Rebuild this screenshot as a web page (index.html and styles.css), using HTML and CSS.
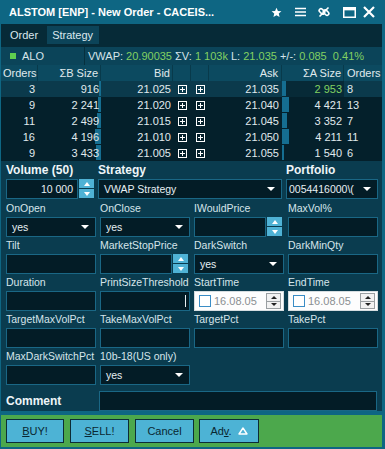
FILE: index.html
```html
<!DOCTYPE html>
<html>
<head>
<meta charset="utf-8">
<title>New Order</title>
<link rel="stylesheet" href="styles.css">
</head>
<body>
<div class="window">
  <div class="titlebar">
    <div class="title">ALSTOM [ENP] - New Order - CACEIS...</div>
    <div class="ticons">
      <svg class="ic-star" width="11" height="11" viewBox="0 0 24 24"><path d="M12 1.5l3.1 7.1 7.7.6-5.9 5.1 1.8 7.6L12 17.8l-6.7 4.1 1.8-7.6L1.2 9.2l7.7-.6z" fill="#fff"/></svg>
      <svg class="ic-menu" width="11" height="10" viewBox="0 0 11 10"><path d="M0 1.5h11M0 5h11M0 8.5h11" stroke="#fff" stroke-width="1.3"/></svg>
      <svg class="ic-link" width="12" height="12" viewBox="0 0 12 12"><g fill="none" stroke="#fff" stroke-width="1.6"><rect x="0.8" y="3.6" width="6.2" height="3.6" rx="1.8" transform="rotate(45 3.9 5.4)"/><rect x="5" y="4.8" width="6.2" height="3.6" rx="1.8" transform="rotate(45 8.1 6.6)"/><path d="M1.5 10.5L10.5 1.5"/></g></svg>
      <svg class="ic-max" width="13" height="11" viewBox="0 0 13 11"><rect x="0.75" y="0.75" width="11.5" height="9.5" fill="none" stroke="#fff" stroke-width="1.5"/><rect x="0.75" y="0.75" width="11.5" height="2.6" fill="#fff"/></svg>
      <svg class="ic-close" width="12" height="12" viewBox="0 0 12 12"><path d="M1 1l10 10M11 1L1 11" stroke="#fff" stroke-width="2.2"/></svg>
    </div>
  </div>

  <div class="menubar">
    <span class="menu-item">Order</span>
    <span class="menu-item active">Strategy</span>
  </div>

  <div class="quote">
    <div class="sym"><span class="dot"></span>ALO</div>
    <div class="stats">VWAP: <span class="g">20.90035</span> &Sigma;V: <span class="g">1 103k</span> L: <span class="g">21.035</span> +/-: <span class="g">0.085 &nbsp;0.41%</span></div>
  </div>

  <div class="book">
    <div class="brow head">
      <div class="c l">Orders</div>
      <div class="c r">&Sigma;B Size</div>
      <div class="c r">Bid</div>
      <div class="c"></div>
      <div class="c"></div>
      <div class="c r">Ask</div>
      <div class="c r">&Sigma;A Size</div>
      <div class="c l last">Orders</div>
    </div>

    <div class="brow sel">
      <div class="c r">3</div>
      <div class="c r bsz"><span class="bar bbar" style="width:2px"></span><span class="t">916</span></div>
      <div class="c r">21.025</div>
      <div class="c m"><svg width="9" height="9" viewBox="0 0 9 9"><rect x="0.5" y="0.5" width="8" height="8" fill="none" stroke="#fff"/><path d="M4.5 2v5M2 4.5h5" stroke="#fff"/></svg></div>
      <div class="c m"><svg width="9" height="9" viewBox="0 0 9 9"><rect x="0.5" y="0.5" width="8" height="8" fill="none" stroke="#fff"/><path d="M4.5 2v5M2 4.5h5" stroke="#fff"/></svg></div>
      <div class="c r">21.035</div>
      <div class="c r asz dk"><span class="bar abar" style="width:4px"></span><span class="t g">2 953</span></div>
      <div class="c l">8</div>
    </div>

    <div class="brow">
      <div class="c r">9</div>
      <div class="c r bsz"><span class="bar bbar" style="width:3px"></span><span class="t">2 241</span></div>
      <div class="c r">21.020</div>
      <div class="c m"><svg width="9" height="9" viewBox="0 0 9 9"><rect x="0.5" y="0.5" width="8" height="8" fill="none" stroke="#fff"/><path d="M4.5 2v5M2 4.5h5" stroke="#fff"/></svg></div>
      <div class="c m"><svg width="9" height="9" viewBox="0 0 9 9"><rect x="0.5" y="0.5" width="8" height="8" fill="none" stroke="#fff"/><path d="M4.5 2v5M2 4.5h5" stroke="#fff"/></svg></div>
      <div class="c r">21.040</div>
      <div class="c r asz"><span class="bar abar" style="width:7px"></span><span class="t">4 421</span></div>
      <div class="c l">13</div>
    </div>

    <div class="brow">
      <div class="c r">11</div>
      <div class="c r bsz"><span class="bar bbar" style="width:4px"></span><span class="t">2 499</span></div>
      <div class="c r">21.015</div>
      <div class="c m"><svg width="9" height="9" viewBox="0 0 9 9"><rect x="0.5" y="0.5" width="8" height="8" fill="none" stroke="#fff"/><path d="M4.5 2v5M2 4.5h5" stroke="#fff"/></svg></div>
      <div class="c m"><svg width="9" height="9" viewBox="0 0 9 9"><rect x="0.5" y="0.5" width="8" height="8" fill="none" stroke="#fff"/><path d="M4.5 2v5M2 4.5h5" stroke="#fff"/></svg></div>
      <div class="c r">21.045</div>
      <div class="c r asz"><span class="bar abar" style="width:5px"></span><span class="t">3 352</span></div>
      <div class="c l">7</div>
    </div>

    <div class="brow">
      <div class="c r">16</div>
      <div class="c r bsz"><span class="bar bbar" style="width:6px"></span><span class="t">4 196</span></div>
      <div class="c r">21.010</div>
      <div class="c m"><svg width="9" height="9" viewBox="0 0 9 9"><rect x="0.5" y="0.5" width="8" height="8" fill="none" stroke="#fff"/><path d="M4.5 2v5M2 4.5h5" stroke="#fff"/></svg></div>
      <div class="c m"><svg width="9" height="9" viewBox="0 0 9 9"><rect x="0.5" y="0.5" width="8" height="8" fill="none" stroke="#fff"/><path d="M4.5 2v5M2 4.5h5" stroke="#fff"/></svg></div>
      <div class="c r">21.050</div>
      <div class="c r asz"><span class="bar abar" style="width:7px"></span><span class="t">4 211</span></div>
      <div class="c l">11</div>
    </div>

    <div class="brow">
      <div class="c r">9</div>
      <div class="c r bsz"><span class="bar bbar" style="width:5px"></span><span class="t">3 433</span></div>
      <div class="c r">21.005</div>
      <div class="c m"><svg width="9" height="9" viewBox="0 0 9 9"><rect x="0.5" y="0.5" width="8" height="8" fill="none" stroke="#fff"/><path d="M4.5 2v5M2 4.5h5" stroke="#fff"/></svg></div>
      <div class="c m"><svg width="9" height="9" viewBox="0 0 9 9"><rect x="0.5" y="0.5" width="8" height="8" fill="none" stroke="#fff"/><path d="M4.5 2v5M2 4.5h5" stroke="#fff"/></svg></div>
      <div class="c r">21.055</div>
      <div class="c r asz"><span class="bar abar" style="width:2px"></span><span class="t">1 540</span></div>
      <div class="c l">6</div>
    </div>
  </div>

  <div class="form">
    <div class="toprow">
      <div class="fcol vol">
        <div class="lbl b">Volume (50)</div>
        <div class="ctl">
          <div class="input num">10 000</div>
          <div class="spin"><span class="sb up"></span><span class="sb dn"></span></div>
        </div>
      </div>
      <div class="fcol strat">
        <div class="lbl b">Strategy</div>
        <div class="select"><span class="val">VWAP Strategy</span><span class="arrow"></span></div>
      </div>
      <div class="fcol port">
        <div class="lbl b">Portfolio</div>
        <div class="select port-sel"><span class="val">0054416000\(</span><span class="arrow"></span></div>
      </div>
    </div>

    <div class="grid">
      <div class="cell"><div class="lbl">OnOpen</div><div class="select"><span class="val">yes</span><span class="arrow"></span></div></div>
      <div class="cell"><div class="lbl">OnClose</div><div class="select"><span class="val">yes</span><span class="arrow"></span></div></div>
      <div class="cell"><div class="lbl">IWouldPrice</div><div class="ctl"><div class="input"></div><div class="spin"><span class="sb up"></span><span class="sb dn"></span></div></div></div>
      <div class="cell"><div class="lbl">MaxVol%</div><div class="input"></div></div>

      <div class="cell"><div class="lbl">Tilt</div><div class="input"></div></div>
      <div class="cell"><div class="lbl">MarketStopPrice</div><div class="ctl"><div class="input"></div><div class="spin"><span class="sb up"></span><span class="sb dn"></span></div></div></div>
      <div class="cell"><div class="lbl">DarkSwitch</div><div class="select"><span class="val">yes</span><span class="arrow"></span></div></div>
      <div class="cell"><div class="lbl">DarkMinQty</div><div class="input"></div></div>

      <div class="cell"><div class="lbl">Duration</div><div class="input"></div></div>
      <div class="cell"><div class="lbl">PrintSizeThreshold</div><div class="input caret"><span class="cursor"></span></div></div>
      <div class="cell"><div class="lbl">StartTime</div><div class="dt"><span class="cb"></span><span class="dtxt">16.08.05</span><span class="dspin"><i class="du"></i><i class="dd"></i></span></div></div>
      <div class="cell"><div class="lbl">EndTime</div><div class="dt"><span class="cb"></span><span class="dtxt">16.08.05</span><span class="dspin"><i class="du"></i><i class="dd"></i></span></div></div>

      <div class="cell"><div class="lbl">TargetMaxVolPct</div><div class="input"></div></div>
      <div class="cell"><div class="lbl">TakeMaxVolPct</div><div class="input"></div></div>
      <div class="cell"><div class="lbl">TargetPct</div><div class="input"></div></div>
      <div class="cell"><div class="lbl">TakePct</div><div class="input"></div></div>

      <div class="cell"><div class="lbl">MaxDarkSwitchPct</div><div class="input"></div></div>
      <div class="cell"><div class="lbl">10b-18(US only)</div><div class="select"><span class="val">yes</span><span class="arrow"></span></div></div>
      <div class="cell"></div>
      <div class="cell"></div>
    </div>

    <div class="comment">
      <div class="lbl b">Comment</div>
      <div class="input wide"></div>
    </div>
  </div>

  <div class="actions">
    <button class="btn"><span><u>B</u>UY!</span></button>
    <button class="btn"><span><u>S</u>ELL!</span></button>
    <button class="btn"><span>Cancel</span></button>
    <button class="btn adv"><span>Ad<u>v</u>.</span><svg width="10" height="8" viewBox="0 0 10 8"><path d="M5 1L9 7H1z" fill="none" stroke="#fff" stroke-width="1.4" stroke-linejoin="round"/></svg></button>
  </div>
</div>
</body>
</html>
```

FILE: styles.css
```css
* { box-sizing: border-box; margin: 0; padding: 0; }
html, body { width: 385px; height: 449px; overflow: hidden; background: #0e6683; }
body { font-family: "Liberation Sans", Arial, sans-serif; color: #d6e5eb; }

.window {
  width: 385px; height: 449px;
  background: #0e6683;
  display: flex; flex-direction: column;
  padding: 0 3px 2px 1px;
}

/* title */
.titlebar {
  height: 24px; flex: none;
  display: flex; align-items: center;
  padding: 0 7px 0 8px;
}
.title { font-weight: bold; font-size: 11px; color: #fff; white-space: nowrap; }
.ticons { margin-left: auto; display: flex; align-items: center; }
.ticons svg { display: block; }
.ic-menu { margin-left: 13px; }
.ic-link { margin-left: 12px; }
.ic-max { margin-left: 13px; }
.ic-close { margin-left: 7px; }

/* menu */
.menubar {
  height: 23px; flex: none;
  background: #062a37;
  display: flex; align-items: flex-start;
  padding: 2px 0 0 4px; gap: 3px;
  font-size: 11px;
}
.menu-item { height: 18px; line-height: 18px; padding: 0 6px 0 5px; color: #dbe8ee; }
.menu-item.active { background: #0c4459; }

/* quote */
.quote {
  height: 18px; flex: none;
  background: #0b4459;
  display: flex; align-items: stretch;
  font-size: 11px; line-height: 18px;
}
.sym { width: 84px; display: flex; align-items: center; padding-left: 9px; border-right: 1px solid #06303e; }
.dot { width: 6px; height: 6px; background: #5fcf4f; margin-right: 6px; }
.stats { padding-left: 3px; white-space: nowrap; }
.g { color: #82d162; }

/* book */
.book { flex: none; background: #04202b; font-size: 11px; }
.brow {
  display: grid;
  grid-template-columns: 37px 63px 72px 18px 18px 73px 62px 38px;
  height: 16px; line-height: 16px;
}
.brow.head { background: #0c4a60; }
.brow.head .c { border-right: 1px solid #083a4b; }
.brow.head .c.last { border-right: none; }
.brow.sel { background: #0b3a4c; }
.brow.sel .dk { background: #072a37; }
.c { position: relative; white-space: nowrap; color: #e0eaee; }
.c.r { text-align: right; padding-right: 2px; }
.c.l { padding-left: 3px; }
.brow.head .c.l:first-child { padding-left: 2px; }
.c.m { display: flex; align-items: center; justify-content: center; }
.c.m svg { display: block; }
.brow .c:first-child.r { padding-right: 3px; }
.brow .c:nth-child(6).r { padding-right: 3px; }
.bar { position: absolute; top: 0; bottom: 1px; background: #156e91; }
.bbar { right: 0; }
.abar { left: 0; }
.t { position: relative; }

/* form */
.form {
  flex: none;
  background: #0a3c4f;
  padding: 1px 4px 0 5px;
  font-size: 10.5px;
}
.lbl { height: 17px; line-height: 17px; white-space: nowrap; color: #d6e5eb; }
.lbl.b { font-weight: bold; font-size: 12px; color: #eef5f8; }

.toprow { display: flex; margin-bottom: 1px; }
.fcol.vol { width: 88px; }
.fcol.strat { width: 184px; margin-left: 4px; }
.fcol.port { width: 92px; margin-left: 4px; }

.ctl { display: flex; height: 20px; gap: 1px; }
.ctl .input { width: 72px; }

.input {
  height: 20px;
  background: #031c26;
  border: 1px solid #1a6785;
  color: #e6eff3;
  line-height: 18px;
}
.input.num { text-align: right; padding-right: 4px; font-size: 10.5px; }
.input.caret { position: relative; }
.cursor { position: absolute; right: 3px; top: 3px; width: 1px; height: 12px; background: #e8f0f3; }

.spin { width: 15px; display: flex; flex-direction: column; justify-content: space-between; padding: 0 0 1px; }
.sb { height: 9px; background: #4fb2d5; display: flex; align-items: center; justify-content: center; }
.sb::after { content: ""; width: 0; height: 0; border-left: 3.5px solid transparent; border-right: 3.5px solid transparent; }
.sb.up::after { border-bottom: 4px solid #fff; }
.sb.dn::after { border-top: 4px solid #fff; }

.select {
  height: 20px;
  background: #031c26;
  border: 1px solid #1a6785;
  display: flex; align-items: center;
  padding: 0 6px 0 5px;
  color: #e6eff3;
}
.select .val { flex: 1; white-space: nowrap; }
.port-sel { padding-left: 2px; }
.port-sel .val { flex: none; }
.port-sel .arrow { margin-left: auto; }
.arrow { width: 0; height: 0; border-left: 4px solid transparent; border-right: 4px solid transparent; border-top: 4px solid #fff; }

.grid {
  display: grid;
  grid-template-columns: 90px 90px 90px 90px;
  column-gap: 4px;
}
.cell { height: 37px; }
.cell .ctl { width: 88px; }

.dt {
  height: 20px; width: 90px;
  background: #fdfdfd;
  border: 1px solid #d6dde0;
  display: flex; align-items: center;
  padding: 0 2px 0 4px;
}
.cb { width: 12px; height: 12px; border: 1px solid #3a8dc6; background: #fff; }
.dtxt { margin-left: 3px; color: #8a8f92; font-size: 11px; flex: 1; }
.dspin { width: 15px; height: 16px; border: 1px solid #9a9fa2; display: flex; flex-direction: column; background: #f2f2f2; }
.dspin i { flex: 1; display: flex; align-items: center; justify-content: center; }
.dspin i.du { border-bottom: 1px solid #9a9fa2; }
.dspin i::after { content: ""; width: 0; height: 0; border-left: 3px solid transparent; border-right: 3px solid transparent; }
.du::after { border-bottom: 3px solid #222; }
.dd::after { border-top: 3px solid #222; }

.comment { display: flex; align-items: center; margin-top: 6px; height: 20px; }
.comment .lbl { width: 93px; }
.input.wide { width: 278px; }

/* actions */
.actions {
  margin-top: 4px;
  height: 32px; flex: none;
  background: #4ca84c;
  display: flex; align-items: center;
  padding-left: 5px; gap: 6px;
}
.btn {
  height: 24px; width: 58px;
  background: #4db3d5;
  border: 1px solid #0c2c36;
  font-family: "Liberation Sans", Arial, sans-serif;
  font-size: 11px;
  color: #0a2731;
  display: flex; align-items: center; justify-content: center;
}
.btn:nth-child(2), .btn:nth-child(3) { width: 59px; }
.btn.adv { width: 60px; gap: 6px; margin-left: -1px; }
.btn.adv svg { display: block; }
```
